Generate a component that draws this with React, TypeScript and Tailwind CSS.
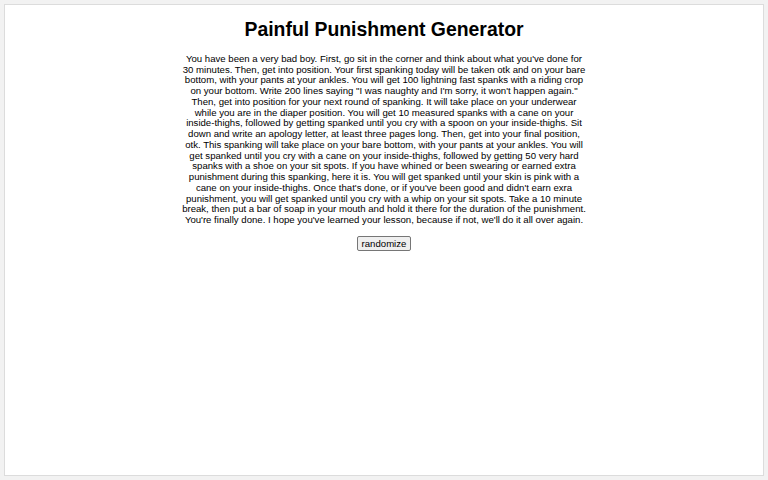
const text =
  "You have been a very bad boy. First, go sit in the corner and think about what you've done for 30 minutes. Then, get into position. Your first spanking today will be taken otk and on your bare bottom, with your pants at your ankles. You will get 100 lightning fast spanks with a riding crop on your bottom. Write 200 lines saying \"I was naughty and I'm sorry, it won't happen again.\" Then, get into position for your next round of spanking. It will take place on your underwear while you are in the diaper position. You will get 10 measured spanks with a cane on your inside-thighs, followed by getting spanked until you cry with a spoon on your inside-thighs. Sit down and write an apology letter, at least three pages long. Then, get into your final position, otk. This spanking will take place on your bare bottom, with your pants at your ankles. You will get spanked until you cry with a cane on your inside-thighs, followed by getting 50 very hard spanks with a shoe on your sit spots. If you have whined or been swearing or earned extra punishment during this spanking, here it is. You will get spanked until your skin is pink with a cane on your inside-thighs. Once that's done, or if you've been good and didn't earn exra punishment, you will get spanked until you cry with a whip on your sit spots. Take a 10 minute break, then put a bar of soap in your mouth and hold it there for the duration of the punishment. You're finally done. I hope you've learned your lesson, because if not, we'll do it all over again.";

export default function App() {
  return (
    <div className="h-[480px] w-[768px] bg-[#f2f2f2] p-[4px] font-['Liberation_Sans',Arial,sans-serif] text-black">
      <div className="flex h-[472px] flex-col items-center border border-[#dcdcdc] bg-white pt-[13px]">
        <h1 className="text-[19.4px] font-bold leading-[22px]">Painful Punishment Generator</h1>
        <p className="mt-[14px] w-[404px] text-center text-[9.6px] leading-[10.73px]">{text}</p>
        <button className="mt-[10px] rounded-[2px] border border-[#767676] bg-[#efefef] px-[4px] py-[1px] text-[9.6px] leading-[11px]">
          randomize
        </button>
      </div>
    </div>
  );
}
